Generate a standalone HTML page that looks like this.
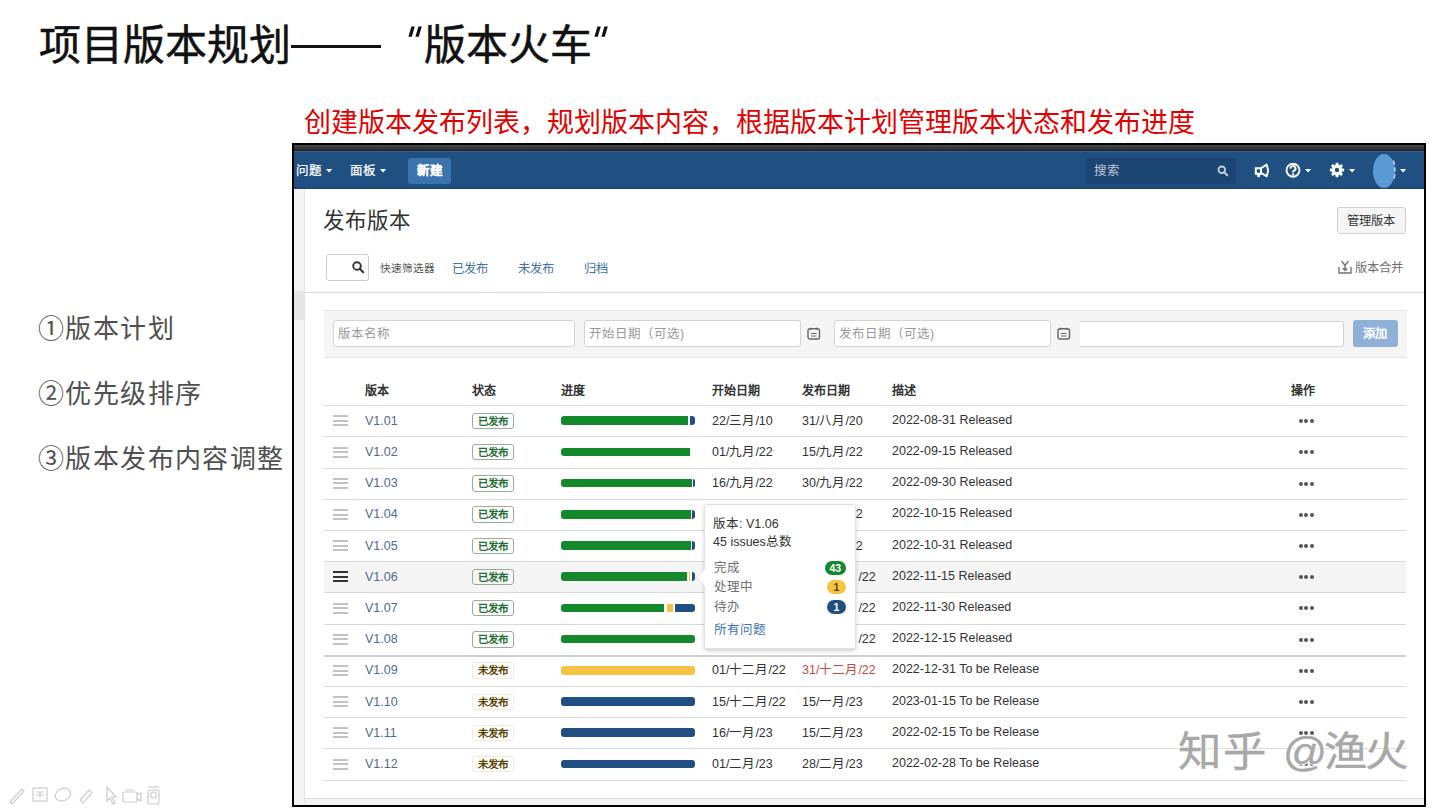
<!DOCTYPE html>
<html lang="zh-CN"><head><meta charset="utf-8">
<style>
*{margin:0;padding:0;box-sizing:border-box}
html,body{width:1440px;height:810px;overflow:hidden;background:#fff}
body{position:relative;font-family:"Liberation Sans",sans-serif;color:#000}
.a{position:absolute;white-space:nowrap}
.tt{font-size:42px;line-height:52px;color:#111;-webkit-text-stroke:0.5px #111}
#sub{left:304px;top:106px;font-size:27px;line-height:34px;color:#e10000}
.li{left:38px;font-size:26px;line-height:30px;color:#505050;letter-spacing:1.4px}
.t{font-size:12.5px;line-height:16px;color:#333}
.th{font-size:12px;line-height:16px;color:#333;font-weight:bold;top:383px}
.loz{width:41.5px;height:16.5px;border:1px solid;border-radius:3px;font-size:10.5px;line-height:14.5px;font-weight:bold;text-align:center}
.rel{border-color:#93ae99;color:#1f6e33}
.unrel{border-color:#f3ecd6;color:#594300}
.nav{font-size:12.5px;line-height:16px;color:#fff;margin-top:1px;-webkit-text-stroke:0.25px #fff}
.wm{font-size:41px;line-height:50px;transform:scaleX(1.06);transform-origin:0 0;color:#a8a8a8;-webkit-text-stroke:0.4px #a8a8a8;text-shadow:0 0 2px #fff,0 0 2px #fff,1px 1px 1px #fff,-1px -1px 1px #fff}
.ph{font-size:12.5px;line-height:16px;color:#999;margin-top:1px}
</style></head>
<body>
<div class="a tt" style="left:39px;top:20px">项目版本规划</div>
<div class="a" style="left:291px;top:45px;width:90px;height:3px;background:#111"></div>
<svg class="a" style="left:407px;top:26px" width="16" height="12"><path d="M4.4 0.6h3.4l-3 10.2h-3.4zM11.4 0.6h3.4l-3 10.2h-3.4z" fill="#111"/></svg>
<div class="a tt" style="left:424px;top:20px">版本火车</div>
<svg class="a" style="left:593px;top:26px" width="16" height="12"><path d="M4.4 0.6h3.4l-3 10.2h-3.4zM11.4 0.6h3.4l-3 10.2h-3.4z" fill="#111"/></svg>
<div class="a" id="sub">创建版本发布列表，规划版本内容，根据版本计划管理版本状态和发布进度</div>
<div class="a li" style="top:314px">①版本计划</div>
<div class="a li" style="top:379px">②优先级排序</div>
<div class="a li" style="top:444px">③版本发布内容调整</div>

<!-- frame contents -->
<div class="a" style="left:292px;top:143px;width:1134px;height:664px;background:#fff"></div>
<div class="a" style="left:294px;top:145px;width:1130px;height:6px;background:linear-gradient(#484848,#1f2226)"></div>
<div class="a" style="left:294px;top:151px;width:1130px;height:38px;background:#205081;border-top:1px solid #3a6190;border-bottom:2px solid #1c4573"></div>
<!-- nav -->
<div class="a nav" style="left:296px;top:162px">问题</div>
<svg class="a" style="left:325.5px;top:169px" width="7" height="4"><path d="M0 0h6.2l-3.1 3.4z" fill="#fff"/></svg>
<div class="a nav" style="left:350px;top:162px">面板</div>
<svg class="a" style="left:379.5px;top:169px" width="7" height="4"><path d="M0 0h6.2l-3.1 3.4z" fill="#fff"/></svg>
<div class="a" style="left:408px;top:158px;width:43px;height:26px;background:#3b73af;border-radius:3px"></div>
<div class="a nav" style="left:417px;top:162px;font-weight:bold;-webkit-text-stroke:0.2px #fff">新建</div>
<div class="a" style="left:1086px;top:158px;width:150px;height:25.5px;background:#1b4573;border-radius:3px"></div>
<div class="a nav" style="left:1094px;top:162px;color:#c0c8d4;-webkit-text-stroke:0">搜索</div>
<svg class="a" style="left:1217px;top:165px" width="12" height="12"><circle cx="4.8" cy="4.8" r="3.3" stroke="#c8d0dc" stroke-width="1.8" fill="none"/><path d="M7.2 7.2l3 3" stroke="#c8d0dc" stroke-width="2" stroke-linecap="round"/></svg>
<svg class="a" style="left:1254px;top:163px" width="16" height="15"><path d="M1.8 5.2h5.2v5.6h-5.2z" fill="none" stroke="#fff" stroke-width="2"/><path d="M7 5.2l5.6-3.6 1.6 5.9-1.6 5.9-5.6-3.6" fill="none" stroke="#fff" stroke-width="1.9" stroke-linejoin="round"/><path d="M3.2 10.5h2.8v3.6h-2.8z" fill="#fff"/></svg>
<svg class="a" style="left:1285px;top:163px" width="17" height="15"><circle cx="8" cy="7.2" r="6.5" stroke="#fff" stroke-width="1.9" fill="none"/><path d="M5.5 5.6a2.5 2.4 0 1 1 3.5 2.1c-.7.4-1 .8-1 1.7" stroke="#fff" stroke-width="2" fill="none"/><circle cx="8" cy="11.4" r="1.2" fill="#fff"/></svg>
<svg class="a" style="left:1304.5px;top:169px" width="7" height="4"><path d="M0 0h6.2l-3.1 3.4z" fill="#fff"/></svg>
<svg class="a" style="left:1329px;top:162px" width="16" height="16"><g fill="#fff"><circle cx="8" cy="8" r="5.2"/><rect x="6.5" y="0.8" width="3" height="14.4" rx="1"/><rect x="0.8" y="6.5" width="14.4" height="3" rx="1"/><rect x="6.5" y="0.8" width="3" height="14.4" rx="1" transform="rotate(45 8 8)"/><rect x="6.5" y="0.8" width="3" height="14.4" rx="1" transform="rotate(-45 8 8)"/></g><circle cx="8" cy="8" r="2.2" fill="#205081"/></svg>
<svg class="a" style="left:1348.5px;top:169px" width="7" height="4"><path d="M0 0h6.2l-3.1 3.4z" fill="#fff"/></svg>
<div class="a" style="left:1372.5px;top:154px;width:22px;height:34px;border-radius:50%;background:#5b9bd5"></div>
<svg class="a" style="left:1389px;top:158px" width="10" height="26"><path d="M4.5 2.5q3 10 0 21" stroke="#e6edf5" stroke-width="1.2" fill="none" stroke-dasharray="4 3"/></svg>
<svg class="a" style="left:1399.5px;top:169px" width="7" height="4"><path d="M0 0h6.2l-3.1 3.4z" fill="#fff"/></svg>

<!-- sidebar strip -->
<div class="a" style="left:294px;top:189px;width:11px;height:616px;background:#f4f4f4;border-right:1px solid #e4e4e4"></div>
<div class="a" style="left:294px;top:291px;width:11px;height:29px;background:#e6e6e6"></div>

<div class="a" style="left:323px;top:207px;font-size:21.5px;line-height:28px;color:#333">发布版本</div>
<div class="a" style="left:1337px;top:207px;width:69px;height:26.5px;background:#f5f5f5;border:1px solid #d0d0d0;border-radius:3px"></div>
<div class="a t" style="left:1347px;top:213px;font-size:12.3px">管理版本</div>

<div class="a" style="left:326px;top:254px;width:43px;height:27px;border:1px solid #ccc;border-radius:3px;background:#fff"></div>
<svg class="a" style="left:352px;top:261px" width="13" height="13"><circle cx="5" cy="5" r="3.8" stroke="#333" stroke-width="1.9" fill="none"/><path d="M7.8 7.8l3.4 3.4" stroke="#333" stroke-width="2.2" stroke-linecap="round"/></svg>
<div class="a" style="left:380px;top:260px;font-size:10.6px;line-height:16px;color:#555">快速筛选器</div>
<div class="a" style="left:452px;top:260.5px;font-size:12.3px;line-height:16px;color:#4473a8">已发布</div>
<div class="a" style="left:518px;top:260.5px;font-size:12.3px;line-height:16px;color:#4473a8">未发布</div>
<div class="a" style="left:584px;top:260.5px;font-size:12.3px;line-height:16px;color:#4473a8">归档</div>
<svg class="a" style="left:1338px;top:260px" width="14" height="14"><path d="M1 7v6h12V7" stroke="#707070" stroke-width="1.3" fill="none"/><path d="M3.5 1.2l3.5 4 3.5-4M7 4.5v6M4.8 8.3L7 10.6l2.2-2.3" stroke="#707070" stroke-width="1.4" fill="none"/></svg>
<div class="a" style="left:1355px;top:260px;font-size:12.3px;line-height:16px;color:#707070">版本合并</div>

<div class="a" style="left:305px;top:291.5px;width:1119px;height:1px;background:#dcdcdc"></div>

<!-- form bar -->
<div class="a" style="left:324px;top:310px;width:1083px;height:47.5px;background:#f5f5f5;border-top:1px solid #e6e6e6;border-bottom:1px solid #e6e6e6"></div>
<div class="a" style="left:333px;top:320px;width:241.5px;height:26.5px;background:#fff;border:1px solid #d4d4d4;border-radius:3px"></div>
<div class="a ph" style="left:338px;top:325px">版本名称</div>
<div class="a" style="left:583.5px;top:320px;width:217px;height:26.5px;background:#fff;border:1px solid #d4d4d4;border-radius:3px"></div>
<div class="a ph" style="left:589px;top:325px">开始日期（可选)</div>
<svg class="a" style="left:806.5px;top:327px" width="14" height="13"><rect x="1" y="1.8" width="11.5" height="10.2" rx="2" stroke="#666" stroke-width="1.4" fill="none"/><path d="M3.8 0.5v2.5M9.7 0.5v2.5M4 6.5h5.5M4 9h5.5" stroke="#666" stroke-width="1" fill="none"/></svg>
<div class="a" style="left:833.5px;top:320px;width:217.5px;height:26.5px;background:#fff;border:1px solid #d4d4d4;border-radius:3px"></div>
<div class="a ph" style="left:839px;top:325px">发布日期（可选)</div>
<svg class="a" style="left:1057px;top:327px" width="14" height="13"><rect x="1" y="1.8" width="11.5" height="10.2" rx="2" stroke="#666" stroke-width="1.4" fill="none"/><path d="M3.8 0.5v2.5M9.7 0.5v2.5M4 6.5h5.5M4 9h5.5" stroke="#666" stroke-width="1" fill="none"/></svg>
<div class="a" style="left:1079.5px;top:320.5px;width:264.5px;height:26px;background:#fff;border:1px solid #d4d4d4;border-left:none;border-radius:0 3px 3px 0"></div>
<div class="a" style="left:1353px;top:320px;width:44.5px;height:26.5px;background:#8fb1d8;border-radius:3px"></div>
<div class="a" style="left:1362.5px;top:325.5px;font-size:12.3px;line-height:16px;color:#fff;font-weight:bold">添加</div>

<!-- table header -->
<div class="a th" style="left:365px">版本</div>
<div class="a th" style="left:472px">状态</div>
<div class="a th" style="left:561px">进度</div>
<div class="a th" style="left:712px">开始日期</div>
<div class="a th" style="left:802px">发布日期</div>
<div class="a th" style="left:892px">描述</div>
<div class="a th" style="left:1291px">操作</div>
<div class="a" style="left:324px;top:405px;width:1082px;height:1px;background:#dcdcdc"></div>

<div class="a" style="left:324px;top:436.3px;width:1082px;height:1px;background:#d9d9d9"></div>
<div class="a" style="left:333px;top:415px;width:15px;height:1.5px;background:#c2c2c2"></div>
<div class="a" style="left:333px;top:420px;width:15px;height:1.5px;background:#c2c2c2"></div>
<div class="a" style="left:333px;top:424px;width:15px;height:1.5px;background:#c2c2c2"></div>
<div class="a t" style="left:365px;top:412.7px;color:#4f6a92">V1.01</div>
<div class="a loz rel" style="left:472px;top:412.7px">已发布</div>
<div class="a" style="left:561px;top:416.4px;width:127.0px;height:8.6px;background:#14892c;border-radius:3px 0 0 3px"></div>
<div class="a" style="left:689.7px;top:416.4px;width:4.9px;height:8.6px;background:#205081;border-radius:0 3px 3px 0"></div>
<div class="a t" style="left:712px;top:412.7px">22/三月/10</div>
<div class="a t" style="left:802px;top:412.7px;">31/八月/20</div>
<div class="a t" style="left:892px;top:411.7px">2022-08-31 Released</div>
<div class="a" style="left:1299.0px;top:419.2px;width:4px;height:4px;border-radius:2px;background:#555"></div>
<div class="a" style="left:1304.3px;top:419.2px;width:4px;height:4px;border-radius:2px;background:#555"></div>
<div class="a" style="left:1309.6px;top:419.2px;width:4px;height:4px;border-radius:2px;background:#555"></div>
<div class="a" style="left:324px;top:467.5px;width:1082px;height:1px;background:#d9d9d9"></div>
<div class="a" style="left:333px;top:447px;width:15px;height:1.5px;background:#c2c2c2"></div>
<div class="a" style="left:333px;top:451px;width:15px;height:1.5px;background:#c2c2c2"></div>
<div class="a" style="left:333px;top:456px;width:15px;height:1.5px;background:#c2c2c2"></div>
<div class="a t" style="left:365px;top:443.9px;color:#4f6a92">V1.02</div>
<div class="a loz rel" style="left:472px;top:443.9px">已发布</div>
<div class="a" style="left:561px;top:447.6px;width:129.4px;height:8.6px;background:#14892c;border-radius:3px 0 0 3px"></div>
<div class="a t" style="left:712px;top:443.9px">01/九月/22</div>
<div class="a t" style="left:802px;top:443.9px;">15/九月/22</div>
<div class="a t" style="left:892px;top:442.9px">2022-09-15 Released</div>
<div class="a" style="left:1299.0px;top:450.4px;width:4px;height:4px;border-radius:2px;background:#555"></div>
<div class="a" style="left:1304.3px;top:450.4px;width:4px;height:4px;border-radius:2px;background:#555"></div>
<div class="a" style="left:1309.6px;top:450.4px;width:4px;height:4px;border-radius:2px;background:#555"></div>
<div class="a" style="left:324px;top:498.7px;width:1082px;height:1px;background:#d9d9d9"></div>
<div class="a" style="left:333px;top:478px;width:15px;height:1.5px;background:#c2c2c2"></div>
<div class="a" style="left:333px;top:482px;width:15px;height:1.5px;background:#c2c2c2"></div>
<div class="a" style="left:333px;top:487px;width:15px;height:1.5px;background:#c2c2c2"></div>
<div class="a t" style="left:365px;top:475.1px;color:#4f6a92">V1.03</div>
<div class="a loz rel" style="left:472px;top:475.1px">已发布</div>
<div class="a" style="left:561px;top:478.8px;width:131.0px;height:8.6px;background:#14892c;border-radius:3px 0 0 3px"></div>
<div class="a" style="left:693px;top:478.8px;width:1.6px;height:8.6px;background:#205081;border-radius:0 3px 3px 0"></div>
<div class="a t" style="left:712px;top:475.1px">16/九月/22</div>
<div class="a t" style="left:802px;top:475.1px;">30/九月/22</div>
<div class="a t" style="left:892px;top:474.1px">2022-09-30 Released</div>
<div class="a" style="left:1299.0px;top:481.6px;width:4px;height:4px;border-radius:2px;background:#555"></div>
<div class="a" style="left:1304.3px;top:481.6px;width:4px;height:4px;border-radius:2px;background:#555"></div>
<div class="a" style="left:1309.6px;top:481.6px;width:4px;height:4px;border-radius:2px;background:#555"></div>
<div class="a" style="left:324px;top:529.9px;width:1082px;height:1px;background:#d9d9d9"></div>
<div class="a" style="left:333px;top:509px;width:15px;height:1.5px;background:#c2c2c2"></div>
<div class="a" style="left:333px;top:514px;width:15px;height:1.5px;background:#c2c2c2"></div>
<div class="a" style="left:333px;top:518px;width:15px;height:1.5px;background:#c2c2c2"></div>
<div class="a t" style="left:365px;top:506.3px;color:#4f6a92">V1.04</div>
<div class="a loz rel" style="left:472px;top:506.3px">已发布</div>
<div class="a" style="left:561px;top:510.0px;width:129.5px;height:8.6px;background:#14892c;border-radius:3px 0 0 3px"></div>
<div class="a" style="left:691.5px;top:510.0px;width:3.1px;height:8.6px;background:#205081;border-radius:0 3px 3px 0"></div>
<div class="a t" style="left:712px;top:506.3px">01/十月/22</div>
<div class="a t" style="left:802px;top:506.3px;">15/十月/22</div>
<div class="a t" style="left:892px;top:505.3px">2022-10-15 Released</div>
<div class="a" style="left:1299.0px;top:512.8px;width:4px;height:4px;border-radius:2px;background:#555"></div>
<div class="a" style="left:1304.3px;top:512.8px;width:4px;height:4px;border-radius:2px;background:#555"></div>
<div class="a" style="left:1309.6px;top:512.8px;width:4px;height:4px;border-radius:2px;background:#555"></div>
<div class="a" style="left:324px;top:561.1px;width:1082px;height:1px;background:#d9d9d9"></div>
<div class="a" style="left:333px;top:540px;width:15px;height:1.5px;background:#c2c2c2"></div>
<div class="a" style="left:333px;top:545px;width:15px;height:1.5px;background:#c2c2c2"></div>
<div class="a" style="left:333px;top:549px;width:15px;height:1.5px;background:#c2c2c2"></div>
<div class="a t" style="left:365px;top:537.5px;color:#4f6a92">V1.05</div>
<div class="a loz rel" style="left:472px;top:537.5px">已发布</div>
<div class="a" style="left:561px;top:541.2px;width:129.5px;height:8.6px;background:#14892c;border-radius:3px 0 0 3px"></div>
<div class="a" style="left:691.8px;top:541.2px;width:2.8px;height:8.6px;background:#205081;border-radius:0 3px 3px 0"></div>
<div class="a t" style="left:712px;top:537.5px">16/十月/22</div>
<div class="a t" style="left:802px;top:537.5px;">31/十月/22</div>
<div class="a t" style="left:892px;top:536.5px">2022-10-31 Released</div>
<div class="a" style="left:1299.0px;top:544.0px;width:4px;height:4px;border-radius:2px;background:#555"></div>
<div class="a" style="left:1304.3px;top:544.0px;width:4px;height:4px;border-radius:2px;background:#555"></div>
<div class="a" style="left:1309.6px;top:544.0px;width:4px;height:4px;border-radius:2px;background:#555"></div>
<div class="a" style="left:324px;top:562.1px;width:1082px;height:30.2px;background:#f5f5f5"></div>
<div class="a" style="left:324px;top:592.3px;width:1082px;height:1px;background:#d9d9d9"></div>
<div class="a" style="left:333px;top:571px;width:15px;height:1.7px;background:#333"></div>
<div class="a" style="left:333px;top:576px;width:15px;height:1.7px;background:#333"></div>
<div class="a" style="left:333px;top:580px;width:15px;height:1.7px;background:#333"></div>
<div class="a t" style="left:365px;top:568.7px;color:#4f6a92">V1.06</div>
<div class="a loz rel" style="left:472px;top:568.7px">已发布</div>
<div class="a" style="left:561px;top:572.4px;width:126.3px;height:8.6px;background:#14892c;border-radius:3px 0 0 3px"></div>
<div class="a" style="left:688.8px;top:572.4px;width:1.6px;height:8.6px;background:#f6c342;border-radius:0 0 0 0"></div>
<div class="a" style="left:691.8px;top:572.4px;width:2.8px;height:8.6px;background:#205081;border-radius:0 3px 3px 0"></div>
<div class="a t" style="left:712px;top:568.7px">01/十一月/22</div>
<div class="a t" style="left:802px;top:568.7px;">15/十一月/22</div>
<div class="a t" style="left:892px;top:567.7px">2022-11-15 Released</div>
<div class="a" style="left:1299.0px;top:575.2px;width:4px;height:4px;border-radius:2px;background:#555"></div>
<div class="a" style="left:1304.3px;top:575.2px;width:4px;height:4px;border-radius:2px;background:#555"></div>
<div class="a" style="left:1309.6px;top:575.2px;width:4px;height:4px;border-radius:2px;background:#555"></div>
<div class="a" style="left:324px;top:623.5px;width:1082px;height:1px;background:#d9d9d9"></div>
<div class="a" style="left:333px;top:603px;width:15px;height:1.5px;background:#c2c2c2"></div>
<div class="a" style="left:333px;top:607px;width:15px;height:1.5px;background:#c2c2c2"></div>
<div class="a" style="left:333px;top:612px;width:15px;height:1.5px;background:#c2c2c2"></div>
<div class="a t" style="left:365px;top:599.9px;color:#4f6a92">V1.07</div>
<div class="a loz rel" style="left:472px;top:599.9px">已发布</div>
<div class="a" style="left:561px;top:603.6px;width:103.4px;height:8.6px;background:#14892c;border-radius:3px 0 0 3px"></div>
<div class="a" style="left:666.7px;top:603.6px;width:5.9px;height:8.6px;background:#f6c342;border-radius:0 0 0 0"></div>
<div class="a" style="left:674.6px;top:603.6px;width:20.0px;height:8.6px;background:#205081;border-radius:0 3px 3px 0"></div>
<div class="a t" style="left:712px;top:599.9px">16/十一月/22</div>
<div class="a t" style="left:802px;top:599.9px;">30/十一月/22</div>
<div class="a t" style="left:892px;top:598.9px">2022-11-30 Released</div>
<div class="a" style="left:1299.0px;top:606.4px;width:4px;height:4px;border-radius:2px;background:#555"></div>
<div class="a" style="left:1304.3px;top:606.4px;width:4px;height:4px;border-radius:2px;background:#555"></div>
<div class="a" style="left:1309.6px;top:606.4px;width:4px;height:4px;border-radius:2px;background:#555"></div>
<div class="a" style="left:324px;top:654.7px;width:1082px;height:2px;background:#cfcfcf"></div>
<div class="a" style="left:333px;top:634px;width:15px;height:1.5px;background:#c2c2c2"></div>
<div class="a" style="left:333px;top:638px;width:15px;height:1.5px;background:#c2c2c2"></div>
<div class="a" style="left:333px;top:643px;width:15px;height:1.5px;background:#c2c2c2"></div>
<div class="a t" style="left:365px;top:631.1px;color:#4f6a92">V1.08</div>
<div class="a loz rel" style="left:472px;top:631.1px">已发布</div>
<div class="a" style="left:561px;top:634.8px;width:133.6px;height:8.6px;background:#14892c;border-radius:3px 3px 3px 3px"></div>
<div class="a t" style="left:712px;top:631.1px">01/十二月/22</div>
<div class="a t" style="left:802px;top:631.1px;">15/十二月/22</div>
<div class="a t" style="left:892px;top:630.1px">2022-12-15 Released</div>
<div class="a" style="left:1299.0px;top:637.6px;width:4px;height:4px;border-radius:2px;background:#555"></div>
<div class="a" style="left:1304.3px;top:637.6px;width:4px;height:4px;border-radius:2px;background:#555"></div>
<div class="a" style="left:1309.6px;top:637.6px;width:4px;height:4px;border-radius:2px;background:#555"></div>
<div class="a" style="left:324px;top:685.9px;width:1082px;height:1px;background:#d9d9d9"></div>
<div class="a" style="left:333px;top:665px;width:15px;height:1.5px;background:#c2c2c2"></div>
<div class="a" style="left:333px;top:670px;width:15px;height:1.5px;background:#c2c2c2"></div>
<div class="a" style="left:333px;top:674px;width:15px;height:1.5px;background:#c2c2c2"></div>
<div class="a t" style="left:365px;top:662.3px;color:#4f6a92">V1.09</div>
<div class="a loz unrel" style="left:472px;top:662.3px">未发布</div>
<div class="a" style="left:561px;top:666.0px;width:133.6px;height:8.6px;background:#f6c342;border-radius:3px 3px 3px 3px"></div>
<div class="a t" style="left:712px;top:662.3px">01/十二月/22</div>
<div class="a t" style="left:802px;top:662.3px;color:#c24a43">31/十二月/22</div>
<div class="a t" style="left:892px;top:661.3px">2022-12-31 To be Release</div>
<div class="a" style="left:1299.0px;top:668.8px;width:4px;height:4px;border-radius:2px;background:#555"></div>
<div class="a" style="left:1304.3px;top:668.8px;width:4px;height:4px;border-radius:2px;background:#555"></div>
<div class="a" style="left:1309.6px;top:668.8px;width:4px;height:4px;border-radius:2px;background:#555"></div>
<div class="a" style="left:324px;top:717.1px;width:1082px;height:1px;background:#d9d9d9"></div>
<div class="a" style="left:333px;top:696px;width:15px;height:1.5px;background:#c2c2c2"></div>
<div class="a" style="left:333px;top:701px;width:15px;height:1.5px;background:#c2c2c2"></div>
<div class="a" style="left:333px;top:705px;width:15px;height:1.5px;background:#c2c2c2"></div>
<div class="a t" style="left:365px;top:693.5px;color:#4f6a92">V1.10</div>
<div class="a loz unrel" style="left:472px;top:693.5px">未发布</div>
<div class="a" style="left:561px;top:697.2px;width:133.6px;height:8.6px;background:#205081;border-radius:3px 3px 3px 3px"></div>
<div class="a t" style="left:712px;top:693.5px">15/十二月/22</div>
<div class="a t" style="left:802px;top:693.5px;">15/一月/23</div>
<div class="a t" style="left:892px;top:692.5px">2023-01-15 To be Release</div>
<div class="a" style="left:1299.0px;top:700.0px;width:4px;height:4px;border-radius:2px;background:#555"></div>
<div class="a" style="left:1304.3px;top:700.0px;width:4px;height:4px;border-radius:2px;background:#555"></div>
<div class="a" style="left:1309.6px;top:700.0px;width:4px;height:4px;border-radius:2px;background:#555"></div>
<div class="a" style="left:324px;top:748.3px;width:1082px;height:1px;background:#d9d9d9"></div>
<div class="a" style="left:333px;top:727px;width:15px;height:1.5px;background:#c2c2c2"></div>
<div class="a" style="left:333px;top:732px;width:15px;height:1.5px;background:#c2c2c2"></div>
<div class="a" style="left:333px;top:736px;width:15px;height:1.5px;background:#c2c2c2"></div>
<div class="a t" style="left:365px;top:724.7px;color:#4f6a92">V1.11</div>
<div class="a loz unrel" style="left:472px;top:724.7px">未发布</div>
<div class="a" style="left:561px;top:728.4px;width:133.6px;height:8.6px;background:#205081;border-radius:3px 3px 3px 3px"></div>
<div class="a t" style="left:712px;top:724.7px">16/一月/23</div>
<div class="a t" style="left:802px;top:724.7px;">15/二月/23</div>
<div class="a t" style="left:892px;top:723.7px">2022-02-15 To be Release</div>
<div class="a" style="left:1299.0px;top:731.2px;width:4px;height:4px;border-radius:2px;background:#555"></div>
<div class="a" style="left:1304.3px;top:731.2px;width:4px;height:4px;border-radius:2px;background:#555"></div>
<div class="a" style="left:1309.6px;top:731.2px;width:4px;height:4px;border-radius:2px;background:#555"></div>
<div class="a" style="left:324px;top:779.5px;width:1082px;height:1px;background:#d9d9d9"></div>
<div class="a" style="left:333px;top:759px;width:15px;height:1.5px;background:#c2c2c2"></div>
<div class="a" style="left:333px;top:763px;width:15px;height:1.5px;background:#c2c2c2"></div>
<div class="a" style="left:333px;top:768px;width:15px;height:1.5px;background:#c2c2c2"></div>
<div class="a t" style="left:365px;top:755.9px;color:#4f6a92">V1.12</div>
<div class="a loz unrel" style="left:472px;top:755.9px">未发布</div>
<div class="a" style="left:561px;top:759.6px;width:133.6px;height:8.6px;background:#205081;border-radius:3px 3px 3px 3px"></div>
<div class="a t" style="left:712px;top:755.9px">01/二月/23</div>
<div class="a t" style="left:802px;top:755.9px;">28/二月/23</div>
<div class="a t" style="left:892px;top:754.9px">2022-02-28 To be Release</div>
<div class="a" style="left:1299.0px;top:762.4px;width:4px;height:4px;border-radius:2px;background:#555"></div>
<div class="a" style="left:1304.3px;top:762.4px;width:4px;height:4px;border-radius:2px;background:#555"></div>
<div class="a" style="left:1309.6px;top:762.4px;width:4px;height:4px;border-radius:2px;background:#555"></div>

<!-- footer line -->
<div class="a" style="left:305px;top:798px;width:1119px;height:7px;background:#f4f4f4;border-top:1px solid #dedede"></div>

<!-- tooltip -->
<div class="a" style="left:703.5px;top:504px;width:152px;height:144.5px;background:#fff;border:1px solid #e2e2e2;border-radius:3px;box-shadow:0 2px 4px rgba(0,0,0,.18)"></div>
<svg class="a" style="left:696px;top:568.5px" width="10" height="18"><path d="M9 0.5L0.8 8.8L9 17" fill="#fff" stroke="#e2e2e2" stroke-width="1"/><rect x="8" y="1" width="2" height="16" fill="#fff"/></svg>
<div class="a t" style="left:713px;top:515.5px">版本: V1.06</div>
<div class="a t" style="left:713px;top:533.5px">45 issues总数</div>
<div class="a t" style="left:713.5px;top:559.5px;color:#707070">完成</div>
<div class="a t" style="left:713.5px;top:579px;color:#707070">处理中</div>
<div class="a t" style="left:713.5px;top:598.5px;color:#707070">待办</div>
<div class="a t" style="left:713.5px;top:621.5px;color:#3b73af">所有问题</div>
<div class="a" style="left:824.5px;top:560.5px;width:21.5px;height:14px;border-radius:7px;background:#14892c;color:#fff;font-size:10.5px;line-height:14px;font-weight:bold;text-align:center">43</div>
<div class="a" style="left:827px;top:580px;width:19px;height:14.2px;border-radius:7px;background:#f6c342;color:#594300;font-size:10.5px;line-height:14.2px;font-weight:bold;text-align:center">1</div>
<div class="a" style="left:827px;top:599.5px;width:19px;height:14.2px;border-radius:7px;background:#205081;color:#fff;font-size:10.5px;line-height:14.2px;font-weight:bold;text-align:center">1</div>

<!-- frame border -->
<div class="a" style="left:292px;top:143px;width:1134px;height:664px;border:2px solid #000"></div>

<!-- watermark -->
<div class="a wm" style="left:1178px;top:727px">知</div><div class="a wm" style="left:1223px;top:727px">乎</div><div class="a wm" style="left:1283px;top:727px">@</div><div class="a wm" style="left:1324px;top:727px">渔</div><div class="a wm" style="left:1365px;top:727px">火</div>

<!-- slide toolbar -->
<svg class="a" style="left:2px;top:783px" width="160" height="22"><g stroke="#ccc" stroke-width="1.2" fill="none"><path d="M8 19l12-13 2 2-12 13z"/><rect x="31" y="5" width="14" height="13"/><path d="M34 9h8M34 12h8M38 9v6"/><ellipse cx="61" cy="11.5" rx="8" ry="6" transform="rotate(-25 61 11.5)"/><path d="M78 17l9-10 3 3-9 10z" /><path d="M105 4v14l3-3 3 6 2-1-3-6h4z"/><rect x="121" y="9" width="14" height="10" rx="1"/><path d="M135 12l4-2v8l-4-2M124 7h8"/><rect x="146" y="7" width="11" height="14" rx="2"/><circle cx="151.5" cy="12" r="3"/><path d="M146 4h11"/></g></svg>
</body></html>
